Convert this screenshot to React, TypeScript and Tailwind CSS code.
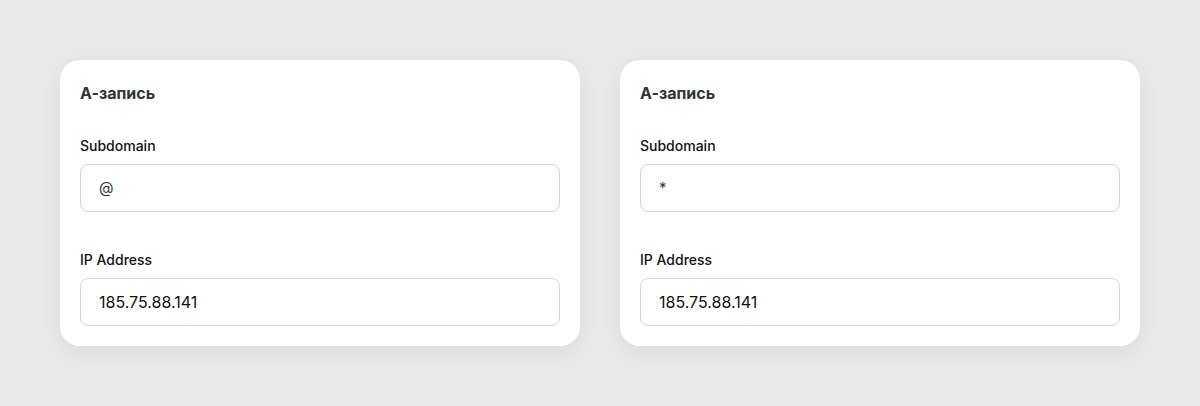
import React from "react";

const records = [
  { subdomain: "@", ip: "185.75.88.141" },
  { subdomain: "*", ip: "185.75.88.141" },
];

function Field({ label, value, small }: { label: string; value: string; small?: boolean }) {
  return (
    <div className="flex flex-col">
      <label className="text-[14px] leading-[20px] font-medium text-[#111] mb-[8px]">{label}</label>
      <div className="h-[48px] rounded-[8px] border border-[#d6d6dc] bg-white flex items-center px-[18px]">
        <span className={small ? "text-[15px] text-[#333]" : "text-[16px] text-[#111]"}>{value}</span>
      </div>
    </div>
  );
}

function RecordCard({ subdomain, ip }: { subdomain: string; ip: string }) {
  return (
    <div className="w-[520px] bg-white rounded-[20px] shadow-[0_6px_24px_rgba(0,0,0,0.06)] px-[20px] pt-[22px] pb-[20px]">
      <h3 className="text-[16px] leading-[22px] font-bold text-[#333] mb-[32px]">А-запись</h3>
      <div className="flex flex-col gap-[38px]">
        <Field label="Subdomain" value={subdomain} small />
        <Field label="IP Address" value={ip} />
      </div>
    </div>
  );
}

export default function App() {
  return (
    <div
      className="w-[1200px] h-[406px] bg-[#e9e9e9] flex items-start gap-[40px] px-[60px] pt-[60px]"
      style={{ fontFamily: "Inter, 'Noto Sans', sans-serif" }}
    >
      {records.map((r, i) => (
        <RecordCard key={i} subdomain={r.subdomain} ip={r.ip} />
      ))}
    </div>
  );
}
